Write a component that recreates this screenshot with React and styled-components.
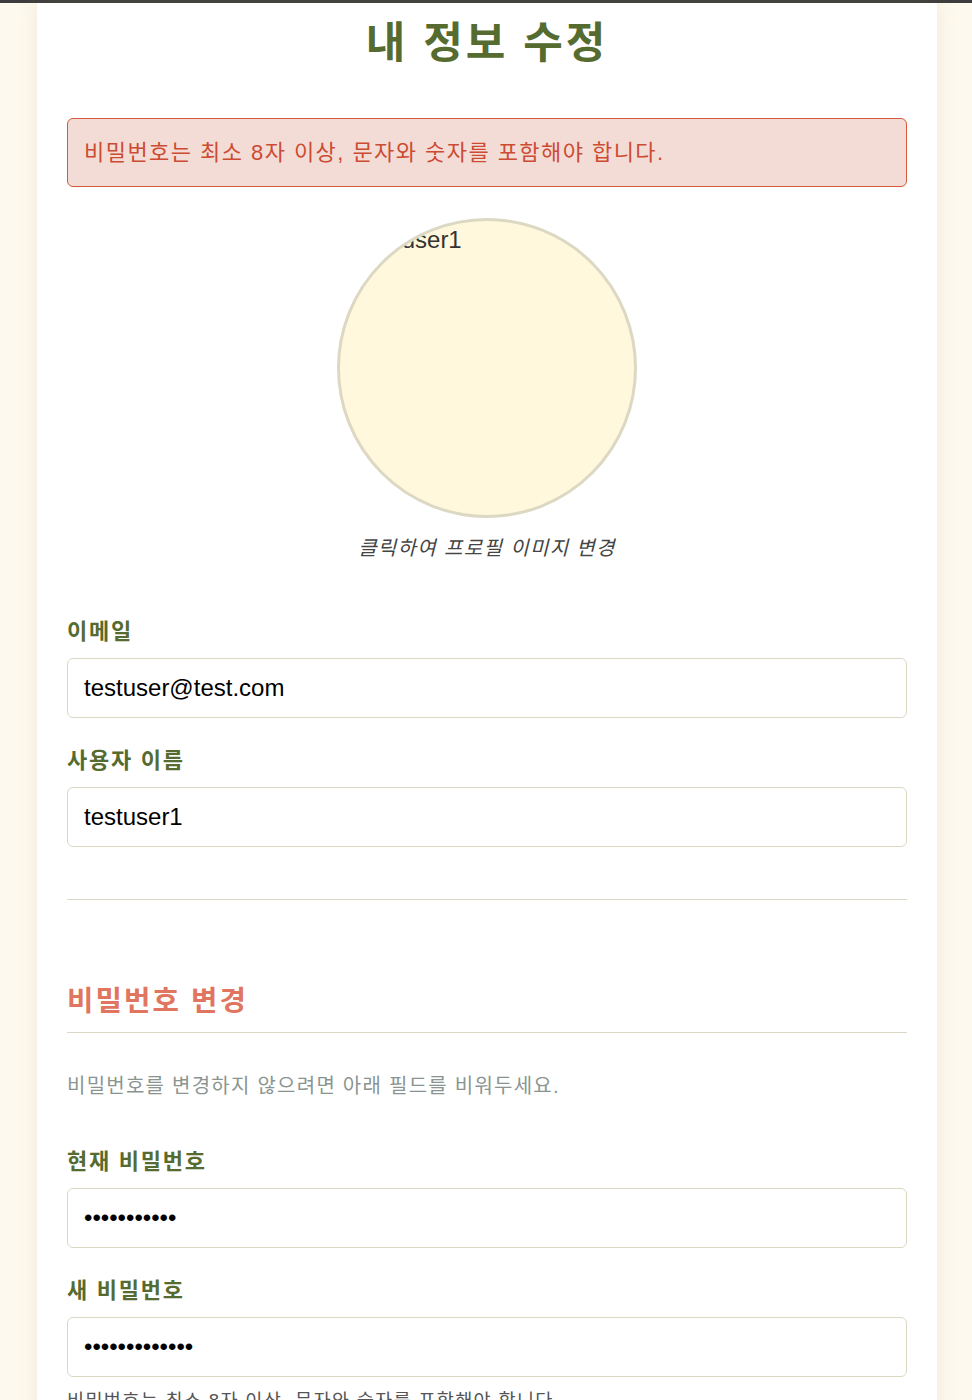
import React, { useState } from 'react';
import styled, { createGlobalStyle } from 'styled-components';

const GlobalStyle = createGlobalStyle`
  html, body {
    margin: 0;
    padding: 0;
    background: #fdf9ee;
    font-family: "Liberation Sans", "Noto Sans CJK KR", sans-serif;
  }
`;

const TopBar = styled.div`
  height: 3px;
  background: #3d3d3d;
`;

const Page = styled.div`
  display: flex;
  justify-content: center;
  padding: 0 35px 0 37px;
`;

const Card = styled.div`
  width: 900px;
  box-sizing: border-box;
  background: #fff;
  padding: 14px 30px 60px;
  box-shadow: 0 0 18px rgba(160, 140, 90, 0.16);
`;

const Title = styled.h1`
  margin: 0;
  text-align: center;
  font-size: 43px;
  line-height: 52px;
  font-weight: 700;
  letter-spacing: 3px;
  color: #556b2f;
`;

const Alert = styled.div`
  margin-top: 49px;
  padding: 17px 16px;
  border: 1px solid #d35a3c;
  border-radius: 6px;
  background: #f3dcd6;
  color: #cc4b32;
  font-size: 22px;
  line-height: 33px;
  letter-spacing: 1.45px;
`;

const AvatarBlock = styled.div`
  display: flex;
  flex-direction: column;
  align-items: center;
  margin-top: 31px;
`;

const Avatar = styled.div`
  width: 300px;
  height: 300px;
  box-sizing: border-box;
  border-radius: 50%;
  border: 3px solid #ddd8c3;
  background: #fff8dc;
  overflow: hidden;
  cursor: pointer;
`;

const AltText = styled.span`
  display: block;
  padding: 5px 0 0 23px;
  font-size: 24px;
  line-height: 28px;
  color: #333;
  white-space: nowrap;
`;

const Caption = styled.p`
  margin: 15px 0 0;
  font-size: 20px;
  line-height: 30px;
  font-style: italic;
  letter-spacing: 1.35px;
  color: #444;
`;

const Fields = styled.div`
  display: flex;
  flex-direction: column;
  gap: 29px;
  margin-top: ${p => p.$top}px;
`;

const Field = styled.div`
  display: flex;
  flex-direction: column;
`;

const Label = styled.label`
  font-size: 22px;
  line-height: 27px;
  font-weight: 700;
  letter-spacing: 1.75px;
  color: #556b2f;
  margin-bottom: 13px;
`;

const Input = styled.input`
  height: 60px;
  box-sizing: border-box;
  padding: 0 16px;
  border: 1px solid #ddd8c3;
  border-radius: 6px;
  font-family: "Liberation Sans", "Noto Sans CJK KR", sans-serif;
  font-size: 24px;
  color: #000;
  background: #fff;
  outline: none;
`;

const Hint = styled.p`
  margin: 10px 0 0;
  font-size: 18.6px;
  line-height: 28px;
  letter-spacing: 1.3px;
  color: #555;
`;

const Divider = styled.hr`
  margin: 52px 0 0;
  border: 0;
  border-top: 1px solid #ddd8c3;
`;

const SectionTitle = styled.h2`
  margin: 84px 0 0;
  padding-bottom: 14px;
  border-bottom: 1px solid #ddd8c3;
  font-size: 28.7px;
  line-height: 34px;
  font-weight: 700;
  letter-spacing: 2.1px;
  color: #e07560;
`;

const Helper = styled.p`
  margin: 38px 0 0;
  font-size: 20px;
  line-height: 30px;
  letter-spacing: 1.25px;
  color: #8a9591;
`;

const SaveButton = styled.button`
  margin-top: 40px;
  width: 100%;
  height: 56px;
  border: 0;
  border-radius: 6px;
  background: #556b2f;
  color: #fff;
  font-size: 22px;
  font-weight: 700;
  font-family: "Liberation Sans", "Noto Sans CJK KR", sans-serif;
`;

export default function App() {
  const [email, setEmail] = useState('testuser@test.com');
  const [name, setName] = useState('testuser1');
  const [current, setCurrent] = useState('password123');
  const [next, setNext] = useState('newpassword12');
  const [confirm, setConfirm] = useState('');

  return (
    <>
      <GlobalStyle />
      <TopBar />
      <Page>
        <Card>
          <Title>내 정보 수정</Title>
          <Alert>비밀번호는 최소 8자 이상, 문자와 숫자를 포함해야 합니다.</Alert>

          <AvatarBlock>
            <Avatar>
              <AltText>testuser1</AltText>
            </Avatar>
            <Caption>클릭하여 프로필 이미지 변경</Caption>
          </AvatarBlock>

          <Fields $top={55}>
            <Field>
              <Label>이메일</Label>
              <Input value={email} onChange={e => setEmail(e.target.value)} />
            </Field>
            <Field>
              <Label>사용자 이름</Label>
              <Input value={name} onChange={e => setName(e.target.value)} />
            </Field>
          </Fields>

          <Divider />

          <SectionTitle>비밀번호 변경</SectionTitle>
          <Helper>비밀번호를 변경하지 않으려면 아래 필드를 비워두세요.</Helper>

          <Fields $top={47}>
            <Field>
              <Label>현재 비밀번호</Label>
              <Input
                type="password"
                value={current}
                onChange={e => setCurrent(e.target.value)}
              />
            </Field>
            <Field>
              <Label>새 비밀번호</Label>
              <Input
                type="password"
                value={next}
                onChange={e => setNext(e.target.value)}
              />
              <Hint>비밀번호는 최소 8자 이상, 문자와 숫자를 포함해야 합니다.</Hint>
            </Field>
            <Field>
              <Label>새 비밀번호 확인</Label>
              <Input
                type="password"
                value={confirm}
                onChange={e => setConfirm(e.target.value)}
              />
            </Field>
          </Fields>

          <SaveButton>저장</SaveButton>
        </Card>
      </Page>
    </>
  );
}
